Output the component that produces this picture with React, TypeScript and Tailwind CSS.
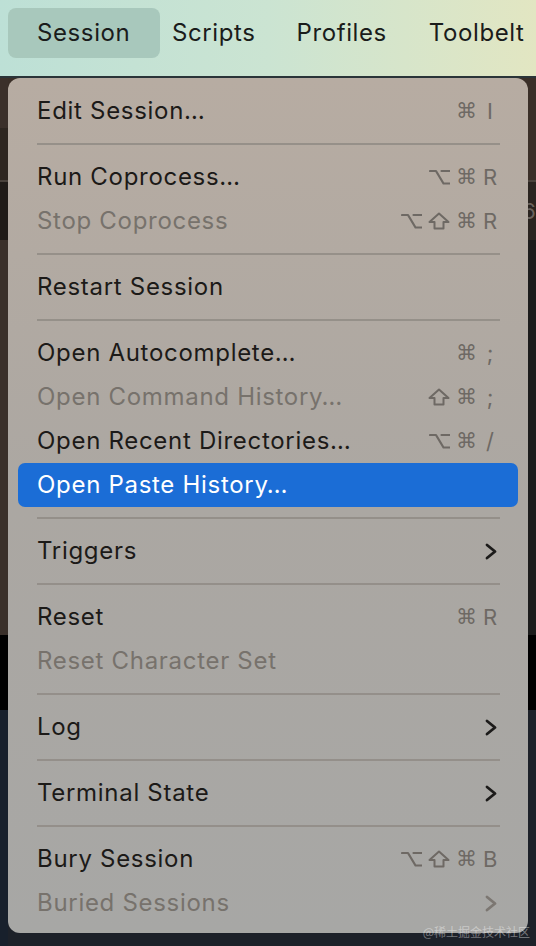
import React from "react";

type Row =
  | { kind: "sep" }
  | {
      kind: "item";
      label: string;
      disabled?: boolean;
      active?: boolean;
      mods?: string[];
      keyChar?: string;
      submenu?: boolean;
    };

const rows: Row[] = [
  { kind: "item", label: "Edit Session…", mods: ["cmd"], keyChar: "I" },
  { kind: "sep" },
  { kind: "item", label: "Run Coprocess…", mods: ["opt", "cmd"], keyChar: "R" },
  { kind: "item", label: "Stop Coprocess", disabled: true, mods: ["opt", "shift", "cmd"], keyChar: "R" },
  { kind: "sep" },
  { kind: "item", label: "Restart Session" },
  { kind: "sep" },
  { kind: "item", label: "Open Autocomplete…", mods: ["cmd"], keyChar: ";" },
  { kind: "item", label: "Open Command History…", disabled: true, mods: ["shift", "cmd"], keyChar: ";" },
  { kind: "item", label: "Open Recent Directories…", mods: ["opt", "cmd"], keyChar: "/" },
  { kind: "item", label: "Open Paste History…", active: true },
  { kind: "sep" },
  { kind: "item", label: "Triggers", submenu: true },
  { kind: "sep" },
  { kind: "item", label: "Reset", mods: ["cmd"], keyChar: "R" },
  { kind: "item", label: "Reset Character Set", disabled: true },
  { kind: "sep" },
  { kind: "item", label: "Log", submenu: true },
  { kind: "sep" },
  { kind: "item", label: "Terminal State", submenu: true },
  { kind: "sep" },
  { kind: "item", label: "Bury Session", mods: ["opt", "shift", "cmd"], keyChar: "B" },
  { kind: "item", label: "Buried Sessions", disabled: true, submenu: true },
];

const MOD_COLOR = "#6e6964";

function Chevron({ disabled }: { disabled?: boolean }) {
  return (
    <svg width="12" height="17" viewBox="0 0 12 17" fill="none">
      <polyline
        points="2,2 10,8.5 2,15"
        stroke={disabled ? "#7c7772" : "#1c1b1a"}
        strokeWidth="2.8"
        strokeLinecap="round"
        strokeLinejoin="round"
      />
    </svg>
  );
}

function Mod({ name }: { name: string }) {
  if (name === "shift") {
    return (
      <svg width="22" height="18" viewBox="0 0 22 18" fill="none">
        <path
          d="M11 1.5 L20.5 10 H15.5 V16.5 H6.5 V10 H1.5 Z"
          stroke={MOD_COLOR}
          strokeWidth="2"
          strokeLinejoin="round"
        />
      </svg>
    );
  }
  if (name === "opt") {
    return (
      <svg width="21" height="18" viewBox="0 0 21 18" fill="none">
        <path
          d="M1 3 H7 L14.5 15.5 H20.5 M12.5 3 H20.5"
          stroke={MOD_COLOR}
          strokeWidth="2.2"
          strokeLinecap="round"
          strokeLinejoin="round"
        />
      </svg>
    );
  }
  return (
    <span
      className="w-[21px] text-center leading-none text-[21px]"
      style={{ fontFamily: "'DejaVu Sans', sans-serif", color: MOD_COLOR }}
    >
      ⌘
    </span>
  );
}

export default function App() {
  return (
    <div
      className="relative w-[536px] h-[946px] overflow-hidden bg-[#1c1c1c]"
      style={{ fontFamily: "Inter, 'Noto Sans', sans-serif" }}
    >
      {/* menu bar */}
      <div className="h-[76px] flex items-start pt-[8px] bg-gradient-to-r from-[#bde0d6] via-[#cbe4d2] to-[#e2e6c2] tracking-[0.6px]">
        <div className="ml-[8px] h-[50px] w-[152px] rounded-[8px] bg-[#a8c8bc] flex items-center pl-[29px] text-[24px] text-[#1a1c1b]">
          Session
        </div>
        <div className="h-[50px] flex items-center ml-[12px] text-[24px] text-[#1a1c1b]">Scripts</div>
        <div className="h-[50px] flex items-center ml-[41px] text-[24px] text-[#1a1c1b]">Profiles</div>
        <div className="h-[50px] flex items-center ml-[42px] text-[24px] text-[#1a1c1b]">Toolbelt</div>
      </div>
      {/* backdrop (terminal window behind) */}
      <div className="h-[2px] bg-[#2a3438]" />
      <div className="flex h-[50px]">
        <div className="w-[8px] bg-[#3b302a]" />
        <div className="flex-1 bg-[#3a2f28]" />
      </div>
      <div className="flex h-[52px]">
        <div className="w-[8px] bg-[#2e2620]" />
        <div className="flex-1 bg-[#3a2f28]" />
      </div>
      <div className="h-[2px] bg-[#4a423c]" />
      <div className="flex h-[58px]">
        <div className="w-[8px] bg-[#201b18]" />
        <div className="flex-1 bg-[#2a2420] flex justify-end items-center text-[22px] text-[#6a635d]">
          <span>6</span>
        </div>
      </div>
      <div className="flex h-[395px]">
        <div className="w-[8px] bg-[#3a302a]" />
        <div className="flex-1 bg-[#1c1c1c]" />
      </div>
      <div className="h-[75px] bg-black" />
      <div className="flex h-[236px]">
        <div className="w-[8px] bg-[#18202c]" />
        <div className="flex-1 bg-[#1d2129]" />
      </div>
      <div className="h-[13px] bg-[#1c1a1a]" />

      {/* dropdown menu */}
      <div className="absolute left-[8px] top-[78px] w-[520px] rounded-[12px] pt-[11px] pb-[8px] px-[10px] bg-gradient-to-b from-[#b7aca2] via-[#aba7a2] to-[#a7a7a5]">
        {rows.map((r, i) =>
          r.kind === "sep" ? (
            <div key={i} className="h-[22px] flex items-center">
              <div className="ml-[19px] mr-[18px] flex-1 h-[2px] bg-[#8f8983]/80" />
            </div>
          ) : (
            <div
              key={i}
              className={
                "h-[44px] flex items-center pl-[19px] pr-[21px] rounded-[7px] " +
                (r.active ? "bg-[#1b6dd6] text-white" : r.disabled ? "text-[#77726c]" : "text-[#1c1a18]")
              }
            >
              <span className="text-[24px] leading-none tracking-[0.7px]">{r.label}</span>
              <div className="flex-1" />
              {r.mods && (
                <div className="flex items-center gap-[6px]">
                  {r.mods.map((m, j) => (
                    <Mod key={j} name={m} />
                  ))}
                  <span
                    className="w-[14px] text-center leading-none text-[22px]"
                    style={{ color: MOD_COLOR }}
                  >
                    {r.keyChar}
                  </span>
                </div>
              )}
              {r.submenu && <Chevron disabled={r.disabled} />}
            </div>
          )
        )}
      </div>

      {/* watermark */}
      <div
        className="absolute right-[6px] top-[926px] text-[12px] text-white/40 leading-none"
        style={{ fontFamily: "'Noto Sans CJK SC', sans-serif" }}
      >
        @稀土掘金技术社区
      </div>
    </div>
  );
}
